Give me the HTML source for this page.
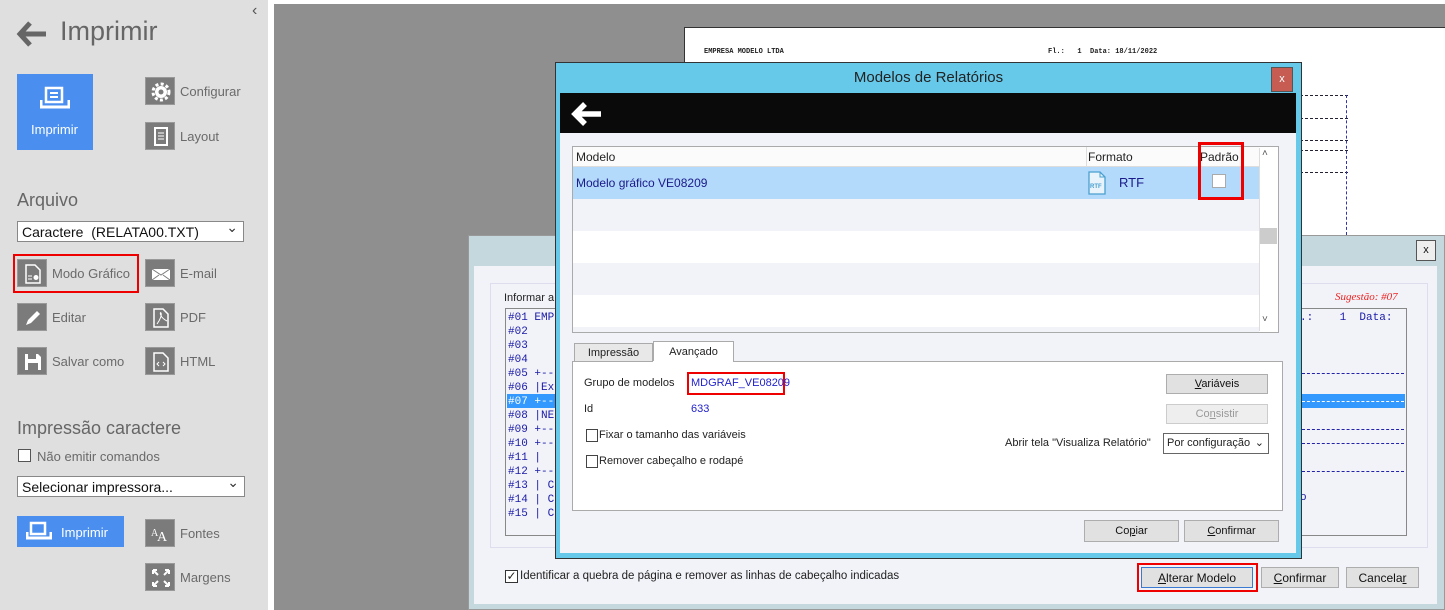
<!DOCTYPE html>
<html><head><meta charset="utf-8">
<style>
*{box-sizing:border-box;margin:0;padding:0}
body{width:1445px;height:610px;overflow:hidden;position:relative;background:#8f8f8f;font-family:"Liberation Sans",sans-serif;font-size:12px;color:#222}
.a{position:absolute}
#left{left:0;top:0;width:268px;height:610px;background:#dfdfdf}
.lt{color:#6a6a6a;font-size:13px}
.ic{position:absolute;width:30px;height:28px;background:#7b7b7b;border:1px solid #999}
.ic svg{position:absolute;left:5px;top:4px}
.sel{position:absolute;background:#fff;border:1px solid #888;height:21px;font-size:14px;color:#111;padding:2px 4px}
.sel:after{content:"⌄";position:absolute;right:5px;top:-3px;font-size:14px;color:#333}
.mono{font-family:"Liberation Mono",monospace;font-size:11px;color:#1a1aa8;white-space:pre;line-height:14px}
.btn{position:absolute;background:#e1e1e1;border:1px solid #adadad;font-size:12px;text-align:center;line-height:20px;color:#111}
.row{position:absolute;left:0;width:686px;height:32px}
</style></head><body>
<div id="left" class="a">
 <div class="a" style="left:252px;top:2px;font-size:16px;color:#555">‹</div>
 <svg class="a" style="left:16px;top:20px" width="32" height="28"><path d="M14 3 L4 14 L14 25 M4 14 H30" stroke="#666" stroke-width="5" fill="none"/></svg>
 <div class="a" style="left:60px;top:16px;font-size:27px;color:#666">Imprimir</div>
 <div class="a" style="left:17px;top:74px;width:76px;height:76px;background:#4a8ff0"></div>
 <svg class="a" style="left:40px;top:86px" width="30" height="24"><rect x="6" y="2" width="16" height="14" fill="none" stroke="#fff" stroke-width="2.5"/><path d="M10 7h8M10 11h8" stroke="#fff" stroke-width="2"/><path d="M1 14v7h28v-7" stroke="#fff" stroke-width="3" fill="none"/></svg>
 <div class="a" style="left:31px;top:122px;color:#fff;font-size:13px">Imprimir</div>
 <div class="ic" style="left:145px;top:77px"><svg width="20" height="20"><circle cx="10" cy="10" r="6" fill="#fff"/><circle cx="10" cy="10" r="8" fill="none" stroke="#fff" stroke-width="3" stroke-dasharray="3 2.3"/><circle cx="10" cy="10" r="2.5" fill="#7b7b7b"/></svg></div>
 <div class="a lt" style="left:180px;top:84px">Configurar</div>
 <div class="ic" style="left:145px;top:122px"><svg width="20" height="20"><rect x="4" y="1" width="12" height="17" fill="none" stroke="#fff" stroke-width="2"/><path d="M7 6h6M7 9h6M7 12h6" stroke="#fff"/></svg></div>
 <div class="a lt" style="left:180px;top:129px">Layout</div>
 <div class="a" style="left:17px;top:190px;font-size:18px;color:#666">Arquivo</div>
 <div class="sel" style="left:17px;top:221px;width:227px">Caractere &nbsp;(RELATA00.TXT)</div>
 <div class="ic" style="left:17px;top:259px"><svg width="20" height="20"><path d="M3 1h9l5 5v13H3z" fill="none" stroke="#fff" stroke-width="1.5"/><path d="M5 12h4M5 15h4" stroke="#fff"/><circle cx="13" cy="13.5" r="2.5" fill="#fff"/></svg></div>
 <div class="a lt" style="left:52px;top:266px">Modo Gráfico</div>
 <div class="a" style="left:13px;top:254px;width:126px;height:39px;border:2px solid #e00"></div>
 <div class="ic" style="left:145px;top:259px"><svg width="20" height="20"><rect x="1" y="5" width="18" height="11" fill="#fff"/><path d="M1 5l9 6 9-6M1 16l7-5M19 16l-7-5" stroke="#7b7b7b" fill="none"/></svg></div>
 <div class="a lt" style="left:180px;top:266px">E-mail</div>
 <div class="ic" style="left:17px;top:303px"><svg width="20" height="20"><path d="M3 17l2-5 9-9 3 3-9 9z" fill="#fff"/></svg></div>
 <div class="a lt" style="left:52px;top:310px">Editar</div>
 <div class="ic" style="left:145px;top:303px"><svg width="20" height="20"><path d="M3 1h9l5 5v13H3z" fill="none" stroke="#fff" stroke-width="1.5"/><path d="M6 16c3-4 5-9 4-11s-2 4 6 8" stroke="#fff" fill="none"/></svg></div>
 <div class="a lt" style="left:180px;top:310px">PDF</div>
 <div class="ic" style="left:17px;top:347px"><svg width="20" height="20"><path d="M2 2h13l3 3v13H2z" fill="#fff"/><rect x="5" y="2" width="8" height="5" fill="#7b7b7b"/><rect x="5" y="11" width="10" height="7" fill="#7b7b7b"/></svg></div>
 <div class="a lt" style="left:52px;top:354px">Salvar como</div>
 <div class="ic" style="left:145px;top:347px"><svg width="20" height="20"><path d="M3 1h9l5 5v13H3z" fill="none" stroke="#fff" stroke-width="1.5"/><path d="M8 10l-2 2 2 2M12 10l2 2-2 2" stroke="#fff" fill="none"/></svg></div>
 <div class="a lt" style="left:180px;top:354px">HTML</div>
 <div class="a" style="left:17px;top:418px;font-size:18px;color:#666">Impressão caractere</div>
 <div class="a" style="left:18px;top:449px;width:13px;height:13px;background:#fff;border:1px solid #555"></div>
 <div class="a lt" style="left:37px;top:449px">Não emitir comandos</div>
 <div class="sel" style="left:17px;top:476px;width:228px">Selecionar impressora...</div>
 <div class="a" style="left:17px;top:516px;width:107px;height:31px;background:#4a8ff0"></div>
 <svg class="a" style="left:26px;top:521px" width="26" height="20"><rect x="5" y="2" width="14" height="11" fill="none" stroke="#fff" stroke-width="2.5"/><path d="M1 11v6h24v-6" stroke="#fff" stroke-width="3" fill="none"/></svg>
 <div class="a" style="left:61px;top:525px;color:#fff;font-size:13px">Imprimir</div>
 <div class="ic" style="left:145px;top:519px"><svg width="20" height="20"><text x="0" y="12" fill="#fff" font-size="10" font-family="Liberation Serif">A</text><text x="6" y="17" fill="#fff" font-size="14" font-family="Liberation Serif">A</text></svg></div>
 <div class="a lt" style="left:180px;top:526px">Fontes</div>
 <div class="ic" style="left:145px;top:563px"><svg width="20" height="20"><path d="M2 2l5 5M2 2h4M2 2v4M18 2l-5 5M18 2h-4M18 2v4M2 18l5-5M2 18h4M2 18v-4M18 18l-5-5M18 18h-4M18 18v-4" stroke="#fff" stroke-width="2"/></svg></div>
 <div class="a lt" style="left:180px;top:570px">Margens</div>
</div>
<div class="a" style="left:268px;top:0;width:6px;height:610px;background:#fff"></div>
<div class="a" style="left:274px;top:0;width:1171px;height:4px;background:#fff"></div>
<!-- paper -->
<div class="a" style="left:684px;top:27px;width:761px;height:210px;background:#fff;border-left:1px solid #333;border-top:1px solid #333"></div>
<div class="a" style="left:704px;top:48px;font-family:'Liberation Mono',monospace;font-size:7px;color:#222;font-weight:bold">EMPRESA MODELO LTDA</div>
<div class="a" style="left:1048px;top:48px;font-family:'Liberation Mono',monospace;font-size:7px;color:#222;font-weight:bold">Fl.:&nbsp;&nbsp;&nbsp;1&nbsp;&nbsp;Data: 18/11/2022</div>
<div class="a" style="left:1300px;top:95px;width:48px;border-top:1px dashed #223"></div>
<div class="a" style="left:1300px;top:118px;width:48px;border-top:1px dashed #223"></div>
<div class="a" style="left:1300px;top:140px;width:48px;border-top:1px dashed #223"></div>
<div class="a" style="left:1300px;top:150px;width:48px;border-top:1px dashed #223"></div>
<div class="a" style="left:1300px;top:172px;width:48px;border-top:1px dashed #223"></div>
<div class="a" style="left:1346px;top:95px;height:140px;border-left:1px dashed #33a"></div>
<!-- back dialog -->
<div class="a" style="left:468px;top:235px;width:977px;height:375px;background:#c4d8de;border:1px solid #999"></div>
<div class="btn" style="left:1416px;top:240px;width:20px;height:21px;background:#eee;border-color:#555;font-size:11px;line-height:18px">x</div>
<div class="a" style="left:474px;top:266px;width:963px;height:338px;background:#f2f3f8"></div>
<div class="a" style="left:490px;top:283px;width:938px;height:265px;border:1px solid #dde"></div>
<div class="a" style="left:504px;top:292px;font-size:11px">Informar a</div>
<div class="a" style="left:1335px;top:291px;font-family:'Liberation Serif',serif;font-style:italic;font-size:11px;color:#e22">Sugestão: #07</div>
<div class="a" style="left:505px;top:308px;width:902px;height:228px;background:#f2f3f8;border:1px solid #888"></div>
<div class="a" style="left:507px;top:394px;width:898px;height:14px;background:#3399ff"></div>
<div class="a mono" style="left:508px;top:311px">#01 EMP
#02
#03
#04
#05 +--
#06 |Ex
<span style="color:#fff">#07 +--</span>
#08 |NE
#09 +--
#10 +--
#11 |
#12 +--
#13 | C
#14 | C
#15 | C</div>
<div class="a mono" style="left:1300px;top:311px">.:    1  Data:</div>
<div class="a" style="left:1302px;top:373px;width:102px;border-top:1px dashed #22a"></div>
<div class="a" style="left:1302px;top:401px;width:102px;border-top:1px dashed #fff"></div>
<div class="a" style="left:1302px;top:429px;width:102px;border-top:1px dashed #22a"></div>
<div class="a" style="left:1302px;top:443px;width:102px;border-top:1px dashed #22a"></div>
<div class="a" style="left:1302px;top:471px;width:102px;border-top:1px dashed #22a"></div>
<div class="a mono" style="left:1300px;top:491px">o</div>
<div class="a" style="left:505px;top:570px;width:13px;height:13px;background:#fff;border:1px solid #333;font-size:12px;line-height:11px;text-align:center">✓</div>
<div class="a" style="left:520px;top:570px;font-size:11.5px">Identificar a quebra de página e remover as linhas de cabeçalho indicadas</div>
<div class="btn" style="left:1141px;top:567px;width:112px;height:21px;border-color:#3a7ad0"><u>A</u>lterar Modelo</div>
<div class="a" style="left:1137px;top:563px;width:121px;height:29px;border:2px solid #e00"></div>
<div class="btn" style="left:1261px;top:567px;width:78px;height:21px"><u>C</u>onfirmar</div>
<div class="btn" style="left:1346px;top:567px;width:73px;height:21px">Cancela<u>r</u></div>
<!-- front dialog -->
<div class="a" style="left:555px;top:62px;width:747px;height:497px;background:#66c9ea;border:1px solid #333"></div>
<div class="a" style="left:555px;top:69px;width:747px;text-align:center;font-size:15px;color:#222">Modelos de Relatórios</div>
<div class="a" style="left:1271px;top:67px;width:22px;height:25px;background:#c75c52;border:1px solid #555;color:#fff;font-size:11px;text-align:center;line-height:22px">x</div>
<div class="a" style="left:560px;top:93px;width:736px;height:40px;background:#0a0a0a"></div>
<svg class="a" style="left:571px;top:101px" width="32" height="26"><path d="M14 3 L4 13 L14 23 M4 13 H30" stroke="#fff" stroke-width="5.5" fill="none"/></svg>
<div class="a" style="left:560px;top:133px;width:736px;height:420px;background:#f2f3f8"></div>
<div class="a" style="left:572px;top:146px;width:707px;height:187px;border:1px solid #aaa;background:#fff"></div>
<div class="a" style="left:573px;top:147px;width:686px;height:185px;overflow:hidden">
 <div class="row" style="top:0;height:20px;background:#fbfbfb;border-bottom:1px solid #ddd"></div>
 <div class="a" style="left:513px;top:0;width:1px;height:20px;background:#ddd"></div>
 <div class="a" style="left:3px;top:3px">Modelo</div>
 <div class="a" style="left:515px;top:3px">Formato</div>
 <div class="a" style="left:627px;top:3px">Padrão</div>
 <div class="row" style="top:20px;background:#b3d9fb"></div>
 <div class="a" style="left:3px;top:29px;color:#1a1a8a">Modelo gráfico VE08209</div>
 <svg class="a" style="left:514px;top:24px" width="20" height="24"><path d="M2 1h11l5 5v17H2z" fill="#e8f3fb" stroke="#4aa0d0" stroke-width="1.3"/><path d="M13 1v5h5" fill="none" stroke="#4aa0d0"/><text x="3" y="17" font-size="6" fill="#4aa0d0" font-family="Liberation Sans" font-weight="bold">RTF</text></svg>
 <div class="a" style="left:546px;top:28px;font-size:13px;color:#1a1a8a">RTF</div>
 <div class="a" style="left:639px;top:27px;width:14px;height:14px;background:#fff;border:1px solid #aaa"></div>
 <div class="row" style="top:52px;background:#f2f3f8"></div>
 <div class="row" style="top:84px;background:#fff"></div>
 <div class="row" style="top:116px;background:#f2f3f8"></div>
 <div class="row" style="top:148px;background:#fff"></div>
 <div class="row" style="top:180px;background:#f2f3f8"></div>
</div>
<div class="a" style="left:1259px;top:148px;width:19px;height:183px;background:#fff;border-left:1px solid #ddd"></div>
<div class="a" style="left:1262px;top:148px;font-size:10px;color:#555">˄</div>
<div class="a" style="left:1262px;top:314px;font-size:10px;color:#555">˅</div>
<div class="a" style="left:1260px;top:228px;width:17px;height:16px;background:#ccc"></div>
<div class="a" style="left:1198px;top:142px;width:46px;height:58px;border:3px solid #e00"></div>
<!-- tabs -->
<div class="a" style="left:574px;top:343px;width:79px;height:19px;background:#e8e8e8;border:1px solid #aaa;font-size:11px;text-align:center;line-height:19px">Impressão</div>
<div class="a" style="left:653px;top:341px;width:81px;height:22px;background:#fff;border:1px solid #aaa;border-bottom:none;font-size:11px;text-align:center;line-height:20px">Avançado</div>
<div class="a" style="left:572px;top:361px;width:711px;height:150px;background:#fff;border:1px solid #aaa;border-top-color:#aaa"></div>
<div class="a" style="left:653px;top:361px;width:80px;height:2px;background:#fff"></div>
<div class="a" style="left:584px;top:377px;font-size:11px">Grupo de modelos</div>
<div class="a" style="left:687px;top:372px;width:98px;height:23px;border:2px solid #e00"></div>
<div class="a" style="left:691px;top:377px;font-size:11px;color:#2222cc">MDGRAF_VE08209</div>
<div class="a" style="left:584px;top:403px;font-size:11px">Id</div>
<div class="a" style="left:691px;top:403px;font-size:11px;color:#2222cc">633</div>
<div class="a" style="left:586px;top:429px;width:12px;height:13px;border:1px solid #444;background:#fff"></div>
<div class="a" style="left:599px;top:429px;font-size:11px">Fixar o tamanho das variáveis</div>
<div class="a" style="left:586px;top:455px;width:12px;height:13px;border:1px solid #444;background:#fff"></div>
<div class="a" style="left:599px;top:455px;font-size:11px">Remover cabeçalho e rodapé</div>
<div class="btn" style="left:1166px;top:374px;width:102px;height:20px;line-height:18px;font-size:11px"><u>V</u>ariáveis</div>
<div class="btn" style="left:1166px;top:404px;width:102px;height:20px;line-height:18px;font-size:11px;color:#999;background:#eee;border-color:#ccc">Co<u>n</u>sistir</div>
<div class="a" style="left:1005px;top:437px;font-size:11px">Abrir tela "Visualiza Relatório"</div>
<div class="a" style="left:1163px;top:433px;width:106px;height:21px;background:#fff;border:1px solid #666;font-size:11px;padding:3px 3px">Por configuração<span style="position:absolute;right:4px;top:2px">⌄</span></div>
<div class="btn" style="left:1084px;top:520px;width:95px;height:22px;font-size:11px">Co<u>p</u>iar</div>
<div class="btn" style="left:1184px;top:520px;width:95px;height:22px;font-size:11px"><u>C</u>onfirmar</div>
</body></html>
